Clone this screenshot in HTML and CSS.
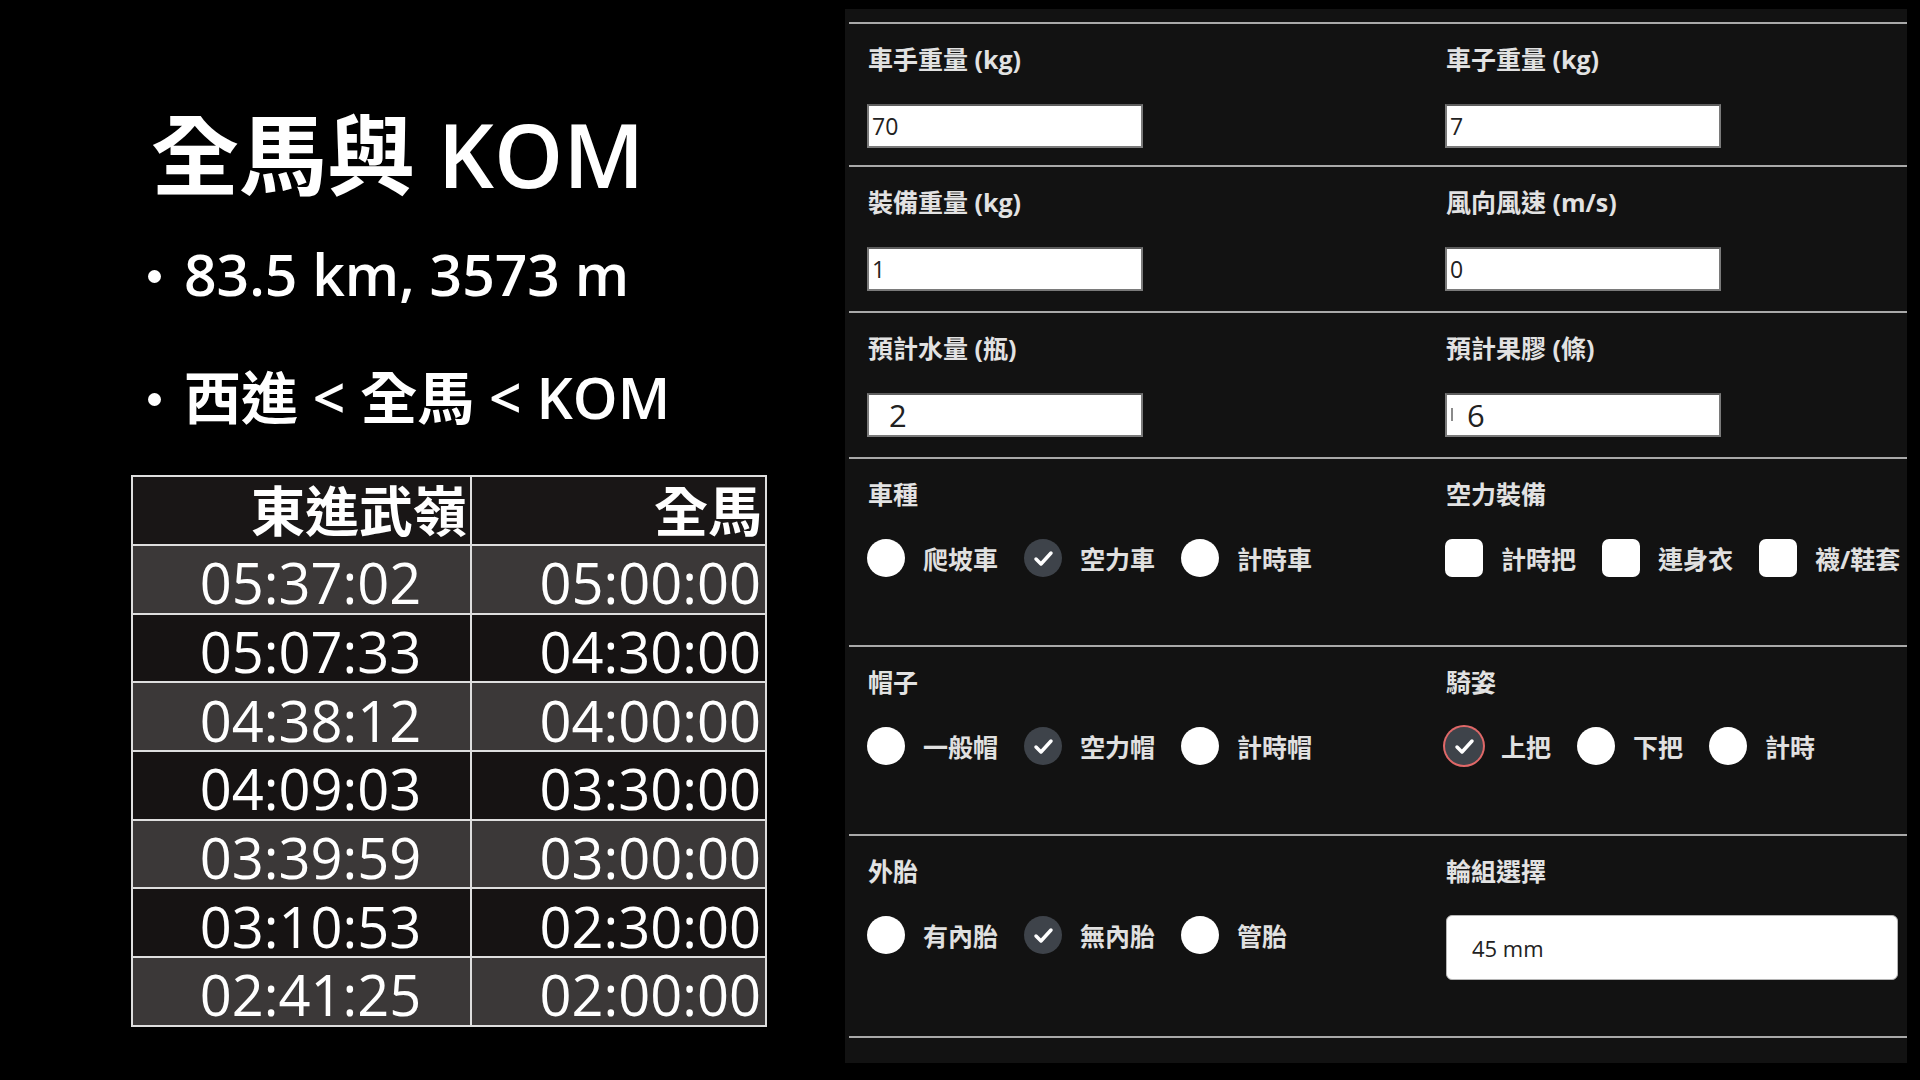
FILE: index.html
```html
<!DOCTYPE html>
<html lang="zh-Hant">
<head>
<meta charset="utf-8">
<title>全馬與 KOM</title>
<link rel="stylesheet" href="styles.css">
</head>
<body>
<div class="page">
  <section class="slide">
    <h1 class="title">全馬與 KOM</h1>
    <ul class="bullets">
      <li>83.5 km, 3573 m</li>
      <li>西進 &lt; 全馬 &lt; KOM</li>
    </ul>
    <table class="times">
      <colgroup><col class="c1"><col class="c2"></colgroup>
      <thead>
        <tr><th>東進武嶺</th><th>全馬</th></tr>
      </thead>
      <tbody>
        <tr class="odd"><td class="l">05:37:02</td><td class="r">05:00:00</td></tr>
        <tr class="even"><td class="l">05:07:33</td><td class="r">04:30:00</td></tr>
        <tr class="odd"><td class="l">04:38:12</td><td class="r">04:00:00</td></tr>
        <tr class="even"><td class="l">04:09:03</td><td class="r">03:30:00</td></tr>
        <tr class="odd"><td class="l">03:39:59</td><td class="r">03:00:00</td></tr>
        <tr class="even"><td class="l">03:10:53</td><td class="r">02:30:00</td></tr>
        <tr class="odd"><td class="l">02:41:25</td><td class="r">02:00:00</td></tr>
      </tbody>
    </table>
  </section>

  <section class="panel">
    <div class="row r1">
      <div class="field"><div class="label">車手重量 (kg)</div><div class="box">70</div></div>
      <div class="field"><div class="label">車子重量 (kg)</div><div class="box">7</div></div>
    </div>
    <div class="row r2">
      <div class="field"><div class="label">裝備重量 (kg)</div><div class="box">1</div></div>
      <div class="field"><div class="label">風向風速 (m/s)</div><div class="box">0</div></div>
    </div>
    <div class="row r2">
      <div class="field"><div class="label">預計水量 (瓶)</div><div class="box big">2</div></div>
      <div class="field"><div class="label">預計果膠 (條)</div><div class="box big"><span class="frag"></span>6</div></div>
    </div>
    <div class="row c1">
      <div class="field"><div class="label">車種</div>
        <div class="opts">
          <div class="opt"><span class="radio"></span>爬坡車</div>
          <div class="opt"><span class="radio on"><svg viewBox="0 0 38 38" width="38" height="38"><polyline points="12,20 17,25 27,14" fill="none" stroke="#fff" stroke-width="3.5" stroke-linecap="round" stroke-linejoin="round"/></svg></span>空力車</div>
          <div class="opt"><span class="radio"></span>計時車</div>
        </div>
      </div>
      <div class="field"><div class="label">空力裝備</div>
        <div class="opts">
          <div class="opt"><span class="check"></span>計時把</div>
          <div class="opt"><span class="check"></span>連身衣</div>
          <div class="opt"><span class="check"></span>襪/鞋套</div>
        </div>
      </div>
    </div>
    <div class="row c2">
      <div class="field"><div class="label">帽子</div>
        <div class="opts">
          <div class="opt"><span class="radio"></span>一般帽</div>
          <div class="opt"><span class="radio on"><svg viewBox="0 0 38 38" width="38" height="38"><polyline points="12,20 17,25 27,14" fill="none" stroke="#fff" stroke-width="3.5" stroke-linecap="round" stroke-linejoin="round"/></svg></span>空力帽</div>
          <div class="opt"><span class="radio"></span>計時帽</div>
        </div>
      </div>
      <div class="field"><div class="label">騎姿</div>
        <div class="opts">
          <div class="opt"><span class="radio on focus"><svg viewBox="0 0 38 38" width="38" height="38"><polyline points="12,20 17,25 27,14" fill="none" stroke="#fff" stroke-width="3.5" stroke-linecap="round" stroke-linejoin="round"/></svg></span>上把</div>
          <div class="opt"><span class="radio"></span>下把</div>
          <div class="opt"><span class="radio"></span>計時</div>
        </div>
      </div>
    </div>
    <div class="row c3">
      <div class="field"><div class="label">外胎</div>
        <div class="opts">
          <div class="opt"><span class="radio"></span>有內胎</div>
          <div class="opt"><span class="radio on"><svg viewBox="0 0 38 38" width="38" height="38"><polyline points="12,20 17,25 27,14" fill="none" stroke="#fff" stroke-width="3.5" stroke-linecap="round" stroke-linejoin="round"/></svg></span>無內胎</div>
          <div class="opt"><span class="radio"></span>管胎</div>
        </div>
      </div>
      <div class="field"><div class="label">輪組選擇</div>
        <div class="select">45 mm</div>
      </div>
    </div>
    <div class="row end"></div>
  </section>
</div>
</body>
</html>
```
FILE: styles.css
```css
html, body {
  margin: 0;
  padding: 0;
  background: #000;
}
body {
  font-family: "Open Sans", "Noto Sans CJK TC", sans-serif;
  color: #fff;
}
.page {
  display: flex;
  width: 1920px;
  height: 1080px;
  overflow: hidden;
}

/* ---------- left slide ---------- */
.slide {
  width: 845px;
  flex: none;
}
.title {
  margin: 104px 0 0 151px;
  font-size: 88px;
  line-height: 100px;
  font-weight: 600;
  white-space: nowrap;
}
.bullets {
  list-style: none;
  margin: 30px 0 0 148px;
  padding: 0;
  font-size: 57px;
  line-height: 80px;
  font-weight: 600;
  white-space: nowrap;
}
.bullets li + li {
  margin-top: 43px;
}
.bullets li::before {
  content: "";
  display: inline-block;
  width: 13px;
  height: 13px;
  border-radius: 50%;
  background: #fff;
  margin-right: 23px;
  vertical-align: 0.23em;
}
.times {
  margin: 38px 0 0 131px;
  border-collapse: collapse;
  table-layout: fixed;
  width: 634px;
}
.times col.c1 { width: 339px; }
.times col.c2 { width: 295px; }
.times th,
.times td {
  border: 2px solid #dedede;
  padding: 0;
  white-space: nowrap;
}
.times thead tr {
  height: 69px;
  background: #191616;
}
.times th {
  font-size: 54px;
  font-weight: 700;
  line-height: 1;
  text-align: right;
  padding-right: 3px;
}
.times tbody tr {
  height: 68.7px;
}
.times tr.odd { background: #3b3838; }
.times tr.even { background: #161313; }
.times td {
  font-size: 56px;
  line-height: 1;
  padding-top: 6px;
}
.times td.l {
  text-align: center;
  padding-left: 18px;
}
.times td.r {
  text-align: right;
  padding-right: 4px;
}

/* ---------- right panel ---------- */
.panel {
  width: 1062px;
  height: 1054px;
  margin-top: 9px;
  flex: none;
  background: #121212;
  padding: 13px 0 0 4px;
  box-sizing: border-box;
  overflow: hidden;
}
.row {
  display: grid;
  grid-template-columns: 578px 1fr;
  border-top: 2px solid #a9a9a9;
  padding: 19px 0 0 19px;
  box-sizing: border-box;
}
.row.r1 { height: 143px; }
.row.r2 { height: 146px; }
.row.c1 { height: 188px; }
.row.c2 { height: 189px; }
.row.c3 { height: 202px; }
.row.end { height: 27px; }

.label {
  font-size: 25px;
  line-height: 32px;
  font-weight: 700;
  color: #e2e2e2;
  margin-bottom: 29px;
  white-space: nowrap;
}
.box {
  position: relative;
  width: 276px;
  height: 44px;
  margin-left: -1px;
  box-sizing: border-box;
  background: #fff;
  border: 2px solid #7a7a7a;
  border-top-color: #5e5e5e;
  font-size: 23px;
  color: #222;
  padding-left: 3px;
  display: flex;
  align-items: center;
}
.box.big {
  font-size: 31px;
  padding-left: 20px;
}
.frag {
  position: absolute;
  left: 4px;
  top: 13px;
  width: 2px;
  height: 13px;
  background: #8a8a8a;
}

.opts {
  display: flex;
  align-items: center;
  gap: 26px;
  margin-left: -1px;
}
.opt {
  display: flex;
  align-items: center;
  gap: 18px;
  font-size: 25px;
  font-weight: 700;
  color: #e0e0e0;
  white-space: nowrap;
}
.radio {
  width: 38px;
  height: 38px;
  border-radius: 50%;
  background: #fff;
  flex: none;
}
.radio.on {
  background: #3e434a;
  display: grid;
  place-items: center;
}
.radio svg {
  display: block;
}
.radio.focus {
  box-shadow: 0 0 0 2px #e06868;
}
.check {
  width: 38px;
  height: 38px;
  border-radius: 7px;
  background: #fff;
  flex: none;
}
.select {
  width: 452px;
  height: 65px;
  box-sizing: border-box;
  background: #fff;
  border: 1px solid #b5b5b5;
  border-radius: 6px;
  font-size: 22px;
  color: #222;
  padding-left: 25px;
  display: flex;
  align-items: center;
  margin-top: -1px;
}
```
